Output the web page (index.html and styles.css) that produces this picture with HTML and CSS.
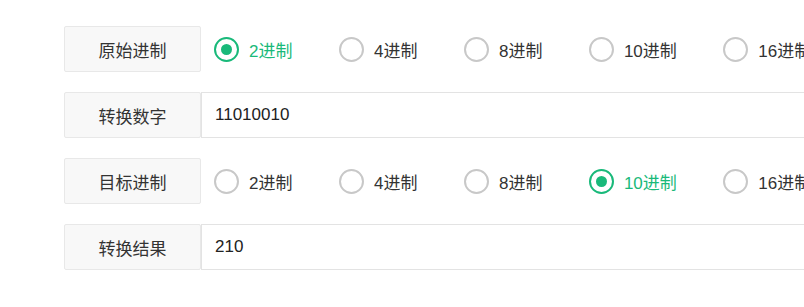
FILE: index.html
```html
<!DOCTYPE html>
<html lang="zh-CN">
<head>
<meta charset="utf-8">
<title>进制转换</title>
<link rel="stylesheet" href="styles.css">
</head>
<body>
<div class="form">
  <div class="row">
    <div class="label">原始进制</div>
    <div class="radios">
      <label class="radio checked"><span class="circle"></span><span class="text">2进制</span></label>
      <label class="radio"><span class="circle"></span><span class="text">4进制</span></label>
      <label class="radio"><span class="circle"></span><span class="text">8进制</span></label>
      <label class="radio"><span class="circle"></span><span class="text">10进制</span></label>
      <label class="radio"><span class="circle"></span><span class="text">16进制</span></label>
    </div>
  </div>
  <div class="row">
    <div class="label">转换数字</div>
    <div class="input">11010010</div>
  </div>
  <div class="row">
    <div class="label">目标进制</div>
    <div class="radios">
      <label class="radio"><span class="circle"></span><span class="text">2进制</span></label>
      <label class="radio"><span class="circle"></span><span class="text">4进制</span></label>
      <label class="radio"><span class="circle"></span><span class="text">8进制</span></label>
      <label class="radio checked"><span class="circle"></span><span class="text">10进制</span></label>
      <label class="radio"><span class="circle"></span><span class="text">16进制</span></label>
    </div>
  </div>
  <div class="row">
    <div class="label">转换结果</div>
    <div class="input">210</div>
  </div>
</div>
</body>
</html>
```

FILE: styles.css
```css
html, body {
  margin: 0;
  padding: 0;
  background: #fff;
  overflow: hidden;
}
body {
  font-family: "Liberation Sans", "Noto Sans CJK SC", sans-serif;
  color: #333;
}
.form {
  padding: 26px 0 0 64px;
  width: 900px;
  display: flex;
  flex-direction: column;
  gap: 20px;
}
.row {
  display: flex;
  height: 46px;
  align-items: stretch;
}
.label {
  box-sizing: border-box;
  flex: 0 0 137px;
  background: #f8f8f8;
  border: 1px solid #e8e8e8;
  border-radius: 2px;
  display: flex;
  align-items: center;
  justify-content: center;
  font-size: 17px;
  color: #333;
}
.input {
  box-sizing: border-box;
  flex: 1;
  border: 1px solid #e3e3e3;
  display: flex;
  align-items: center;
  padding-left: 13px;
  font-size: 17px;
  color: #222;
}
.radios {
  display: flex;
  align-items: center;
  padding-left: 13px;
  white-space: nowrap;
}
.radio {
  display: flex;
  align-items: center;
  margin-right: 46.5px;
  font-size: 17px;
  color: #333;
}
.circle {
  box-sizing: border-box;
  width: 25px;
  height: 25px;
  border: 2px solid #c8c8c8;
  border-radius: 50%;
  margin-right: 10px;
  display: flex;
  align-items: center;
  justify-content: center;
}
.radio.checked .circle {
  border-color: #19b97a;
}
.radio.checked .circle::after {
  content: "";
  width: 11px;
  height: 11px;
  border-radius: 50%;
  background: #19b97a;
}
.radio.checked .text {
  color: #19b97a;
}
```
